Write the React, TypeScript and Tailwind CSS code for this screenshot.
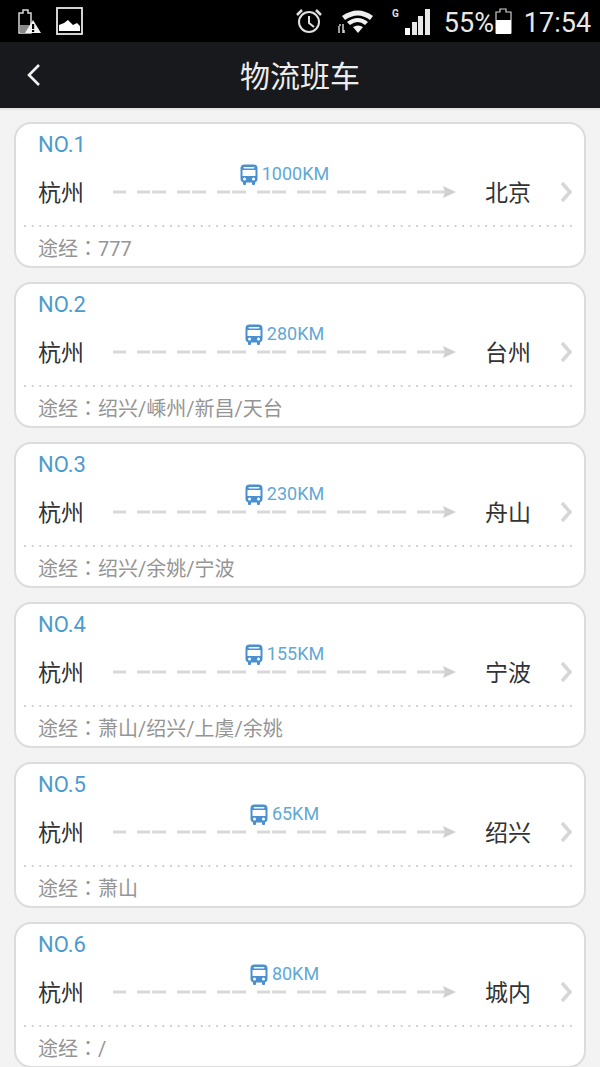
const routes = [
  { no: "NO.1", km: "1000KM", to: "北京", via: "777" },
  { no: "NO.2", km: "280KM", to: "台州", via: "绍兴/嵊州/新昌/天台" },
  { no: "NO.3", km: "230KM", to: "舟山", via: "绍兴/余姚/宁波" },
  { no: "NO.4", km: "155KM", to: "宁波", via: "萧山/绍兴/上虞/余姚" },
  { no: "NO.5", km: "65KM", to: "绍兴", via: "萧山" },
  { no: "NO.6", km: "80KM", to: "城内", via: "/" },
];

const BusIcon = () => (
  <svg width="18" height="21" viewBox="0 0 18 21">
    <path d="M3 17h3v3a1 1 0 0 1-1 1H4a1 1 0 0 1-1-1zM12 17h3v3a1 1 0 0 1-1 1h-1a1 1 0 0 1-1-1z" fill="#4a90d0" />
    <rect x="0.5" y="0.5" width="17" height="18" rx="4" fill="#4a90d0" />
    <rect x="3.5" y="3" width="11" height="1.6" rx="0.8" fill="#ffffff" />
    <rect x="2.5" y="6" width="13" height="6" rx="0.5" fill="#ffffff" />
    <circle cx="4.5" cy="15" r="1.5" fill="#ffffff" />
    <circle cx="13.5" cy="15" r="1.5" fill="#ffffff" />
  </svg>
);

const RouteLine = () => (
  <svg width="343" height="14" viewBox="0 0 343 14" className="block">
    <line x1="0" y1="7" x2="13" y2="7" stroke="#d9d9d9" strokeWidth="3" />
    {[24, 64, 104, 144, 184, 224, 264, 304].map((x) => (
      <g key={x}>
        <line x1={x} y1="7" x2={x + 13} y2="7" stroke="#d9d9d9" strokeWidth="3" />
        <line x1={x + 15} y1="7" x2={x + 29} y2="7" stroke="#d9d9d9" strokeWidth="3" />
      </g>
    ))}
    <path d="M330 1l13 6-13 6 2-6z" fill="#d0d0d0" />
  </svg>
);

const Card = ({ no, km, to, via }: (typeof routes)[number]) => (
  <div className="shrink-0 h-[146px] rounded-[17px] border-2 border-[#dcdcdc] bg-white flex flex-col px-[8px]">
    <div className="pl-[14px] pt-[7px] h-[38px] text-[22px] leading-[28px] text-[#4b9bd0]">{no}</div>
    <div className="flex h-[63px] pl-[14px]">
      <div className="w-[46px] mt-[16px] text-[23px] leading-[32px] text-[#333333] whitespace-nowrap">杭州</div>
      <div className="ml-[29px] w-[343px] flex flex-col items-center">
        <div className="h-[24px] flex items-center gap-[4px] text-[18px] leading-[24px] text-[#62a8d4]">
          <BusIcon />
          <span>{km}</span>
        </div>
        <div className="mt-[-1px]">
          <RouteLine />
        </div>
      </div>
      <div className="ml-[29px] w-[46px] mt-[16px] text-[23px] leading-[32px] text-[#333333] whitespace-nowrap">{to}</div>
      <svg width="13" height="22" viewBox="0 0 13 22" className="ml-[29px] mt-[19px]">
        <path d="M2 2l8 9-8 9" fill="none" stroke="#d6d6d6" strokeWidth="3.4" />
      </svg>
    </div>
    <div className="h-[2px] shrink-0 bg-[linear-gradient(to_right,#d0d0d0_2px,transparent_2px)] bg-[length:7.7px_2px]" />
    <div className="pl-[14px] pt-[5px] text-[20px] leading-[32px] text-[#959595]">
      途经<span className="font-['Noto_Sans_CJK_TC']">：</span>
      {via}
    </div>
  </div>
);

const StatusBar = () => (
  <div className="h-[42px] bg-black flex items-center shrink-0 text-white">
    <svg width="26" height="28" viewBox="0 0 26 28" className="ml-[17px]">
      <path d="M2 6h4V3h5v3h3v20H2z" fill="none" stroke="#d8d8d8" strokeWidth="1.5" />
      <rect x="3" y="18" width="10" height="8" fill="#8a8a8a" />
      <path d="M16 13l-8 13h16z" fill="#f2f2f2" />
      <rect x="15" y="17" width="2.2" height="5" fill="#000000" />
      <rect x="15" y="23" width="2.2" height="2" fill="#000000" />
    </svg>
    <svg width="27" height="28" viewBox="0 0 27 28" className="ml-[13px]">
      <rect x="1" y="1" width="25" height="26" fill="none" stroke="#e8e8e8" strokeWidth="1.8" />
      <path d="M3 24v-6l5-2 4-3 5 5 4-2 3 3v5z" fill="#ffffff" />
    </svg>
    <svg width="30" height="28" viewBox="0 0 30 28" className="ml-[211px]">
      <circle cx="15" cy="15" r="10" fill="none" stroke="#e0e0e0" strokeWidth="2" />
      <path d="M15 9v7l5 4" fill="none" stroke="#e0e0e0" strokeWidth="2" />
      <path d="M3 8l5-5M27 8l-5-5" stroke="#e0e0e0" strokeWidth="2.5" />
    </svg>
    <svg width="36" height="26" viewBox="0 0 36 26" className="ml-[13px]">
      <path d="M5 8Q21-3 36 8l-3 4Q21 3 8 12z" fill="#f0f0f0" />
      <path d="M10 14Q21 6 31 14l-3 3Q21 11 13 17z" fill="#f0f0f0" />
      <path d="M16 19q5-3 10 0l-5 6z" fill="#f0f0f0" />
      <path d="M2 25v-7M6 25v-9M3 16v2M7 25v-3" stroke="#d0d0d0" strokeWidth="1.5" />
    </svg>
    <span className="ml-[19px] self-start mt-[9px] text-[10px] leading-[10px] font-bold text-[#e0e0e0]">G</span>
    <svg width="25" height="26" viewBox="0 0 25 26" className="ml-[6px] mt-[1px]">
      <rect x="0" y="19" width="5" height="7" fill="#ffffff" />
      <rect x="7" y="13" width="5" height="13" fill="#e8e8e8" />
      <rect x="13" y="7" width="5" height="19" fill="#e8e8e8" />
      <rect x="20" y="0" width="5" height="26" fill="#e8e8e8" />
    </svg>
    <span className="ml-[14px] w-[50px] mt-[3px] text-[27px] leading-[30px] text-[#e8e8e8]">55%</span>
    <svg width="17" height="26" viewBox="0 0 17 26" className="ml-[1px]">
      <path d="M1 4h4V1h6v3h5v21H1z" fill="none" stroke="#d0d0d0" strokeWidth="1.2" />
      <rect x="1" y="12" width="15" height="14" fill="#ffffff" />
    </svg>
    <span className="ml-[12px] mt-[3px] text-[27px] leading-[30px] text-[#e8e8e8]">17:54</span>
  </div>
);

export default function App() {
  return (
    <div className="w-[600px] h-[1067px] overflow-hidden bg-[#f3f3f3] flex flex-col font-['Roboto','Noto_Sans_CJK_SC',sans-serif]">
      <StatusBar />
      <div className="relative h-[66px] shrink-0 bg-[#17191c] flex items-center justify-center border-b-2 border-[#e4e4e4] box-content">
        <svg width="16" height="26" viewBox="0 0 16 26" className="absolute left-[26px] top-[20px]">
          <path d="M13 3L3 13l10 10" fill="none" stroke="#f0f0f0" strokeWidth="2.6" />
        </svg>
        <span className="text-[30px] leading-[40px] mt-[3px] text-[#ededed]">物流班车</span>
      </div>
      <div className="flex flex-col gap-[14px] px-[14px] pt-[12px]">
        {routes.map((r) => (
          <Card key={r.no} {...r} />
        ))}
      </div>
    </div>
  );
}
